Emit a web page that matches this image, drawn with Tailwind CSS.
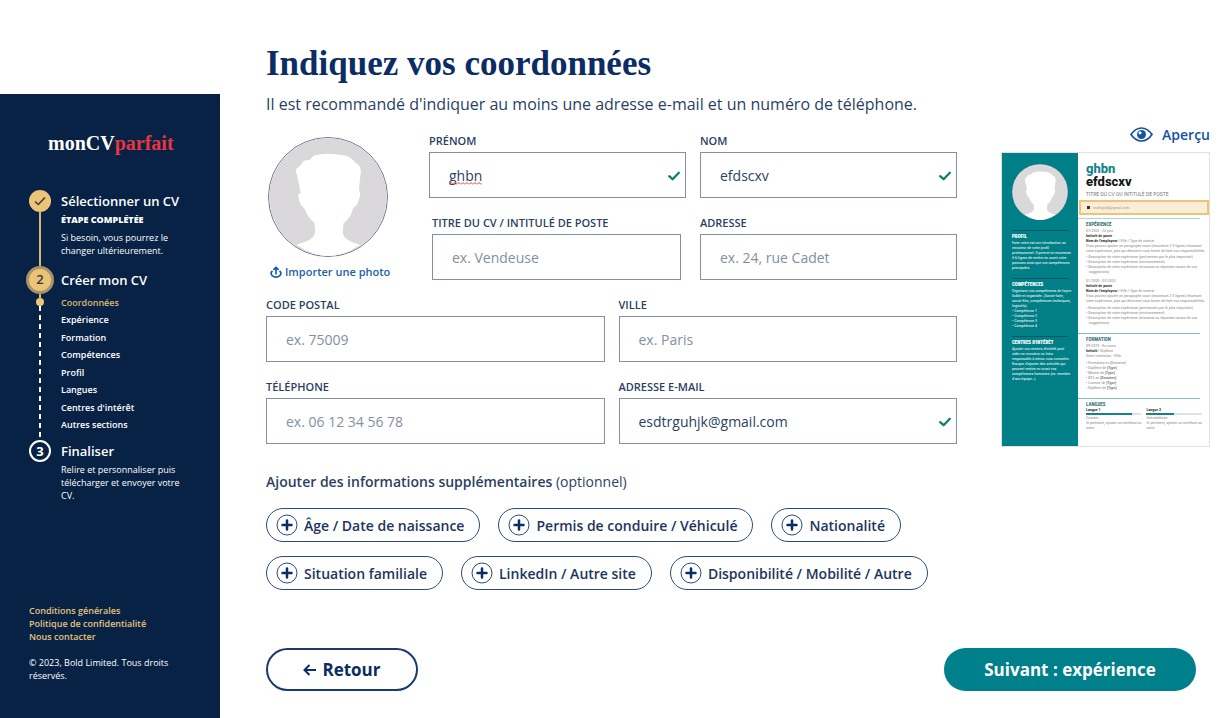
<!DOCTYPE html>
<html lang="fr">
<head>
<meta charset="utf-8">
<meta name="viewport" content="width=device-width, initial-scale=1">
<title>monCVparfait – Coordonnées</title>
<script src="https://cdn.jsdelivr.net/npm/@tailwindcss/browser@4"></script>
</head>
<body class="bg-white text-[#2b3f63] font-['Open_Sans','Noto_Sans',sans-serif]">
<svg class="hidden">
  <symbol id="avatar" viewBox="0 0 358 358">
    <circle cx="179" cy="179" r="178" fill="#dad8da"/>
    <path fill="#fff" d="M81 96L96 82L106 69L124 66L136 53Q176 43 231 53Q252 60 261 74Q280 84 279 101Q275 128 273 159Q279 166 275 180L266 204Q255 208 252 223Q247 242 226 259L224 284Q223 298 238 308Q250 317 276 324Q180 392 84 324L110 315Q140 304 140 284L138 257Q120 245 109 217L96 202Q88 184 89 171L96 167Q90 130 84 110Z"/>
  </symbol>
  <symbol id="tick" viewBox="0 0 12 10"><path d="M1.2 5.2L4.6 8.2L10.8 1.8" fill="none" stroke="#128068" stroke-width="2.3" stroke-linecap="round" stroke-linejoin="round"/></symbol>
  <symbol id="plus" viewBox="0 0 22 22"><circle cx="11" cy="11" r="10" fill="none" stroke="#2d4a7c"/><path d="M11 6.500v9M6.500 11h9" stroke="#0b2d63" stroke-width="2.500" stroke-linecap="round"/></symbol>
</svg>
<div class="flex min-h-screen">
  <aside class="mt-[94px] flex w-[220px] shrink-0 flex-col bg-[#072245] pb-9 text-white">
    <p class="mt-[35px] pl-12 font-['Liberation_Serif',serif] text-[20px] leading-7 font-bold">monCV<span class="text-[#e8363f]">parfait</span></p>
    <ol class="mt-[33px] pl-[26px]">
      <li class="flex min-h-[76px] gap-[7px]">
        <div class="flex w-7 flex-col items-center">
          <span class="flex size-[22px] shrink-0 items-center justify-center rounded-full bg-[#ecc478]"><svg class="h-3 w-3" viewBox="0 0 12 12"><path d="M1 6.500L4.300 9.500L11 2.500" fill="none" stroke="#3a3a3a" stroke-width="1.500"/></svg></span>
          <span class="w-0.5 flex-1 bg-[#d8b572]"></span>
        </div>
        <div>
          <h2 class="text-[13px] leading-[22px] font-semibold">Sélectionner un CV</h2>
          <p class="text-[9px] leading-4 font-extrabold">ÉTAPE COMPLÉTÉE</p>
          <p class="mt-[3px] text-[9px] leading-[13px] font-medium">Si besoin, vous pourrez le<br>changer ultérieurement.</p>
        </div>
      </li>
      <li class="flex gap-[7px]">
        <div class="flex w-7 flex-col items-center">
          <span class="flex size-7 shrink-0 items-center justify-center rounded-full border-[3px] border-[#a8946a] bg-[#ecc478] text-[13px] font-semibold text-[#33363b]">2</span>
          <span class="h-1 w-0.5 bg-[#d8b572]"></span>
          <span class="size-2 rounded-full bg-[#ecc478]"></span>
          <span class="w-0.5 flex-1 bg-[repeating-linear-gradient(to_bottom,#fff_0_5px,transparent_5px_9px)]"></span>
        </div>
        <div class="pb-[7px]">
          <h2 class="text-[13px] leading-7 font-semibold">Créer mon CV</h2>
          <ul class="text-[9px] leading-[17px] font-semibold">
            <li class="text-[#ddb972]">Coordonnées</li>
            <li>Expérience</li>
            <li class="pt-px">Formation</li>
            <li>Compétences</li>
            <li class="pt-px">Profil</li>
            <li>Langues</li>
            <li class="pt-px">Centres d'intérêt</li>
            <li>Autres sections</li>
          </ul>
        </div>
      </li>
      <li class="flex gap-[7px]">
        <div class="flex w-7 flex-col items-center">
          <span class="flex size-[22px] items-center justify-center rounded-full border-2 border-white text-[13px] leading-none font-bold">3</span>
        </div>
        <div>
          <h2 class="text-[13px] leading-[22px] font-semibold">Finaliser</h2>
          <p class="mt-px text-[9px] leading-[13px] font-medium">Relire et personnaliser puis<br>télécharger et envoyer votre<br>CV.</p>
        </div>
      </li>
    </ol>
    <div class="mt-auto pl-[29px] text-[9px] leading-[13px] font-medium">
      <nav class="flex flex-col items-start font-semibold text-[#e5c27b]">
        <a href="#">Conditions générales</a>
        <a href="#">Politique de confidentialité</a>
        <a href="#">Nous contacter</a>
      </nav>
      <p class="mt-[13px]">© 2023, Bold Limited. Tous droits<br>réservés.</p>
    </div>
  </aside>

  <main class="flex flex-1 flex-col pt-[42px] pb-[27px] pl-[46px]">
    <h1 class="font-['Liberation_Serif',serif] text-[35px] leading-[44px] font-bold text-[#0b2d63]">Indiquez vos coordonnées</h1>
    <p class="mt-[6px] text-[16px] leading-6">Il est recommandé d'indiquer au moins une adresse e-mail et un numéro de téléphone.</p>
    <div class="flex flex-1 gap-11 pr-[18px]">
      <form id="coordonnees" class="mt-4 flex-1">
        <div class="flex">
          <div class="flex w-[163px] shrink-0 flex-col pt-[5px] pl-0.5">
            <div class="size-[120px] rounded-full border border-[#6f7890]"><svg class="size-full"><use href="#avatar"/></svg></div>
            <button type="button" class="mt-[7px] flex items-center gap-[3px] pl-0.5 text-[11px] leading-4 font-semibold whitespace-nowrap text-[#1d5fa8]">
              <svg class="size-3" viewBox="0 0 12 12" fill="none" stroke="#1257a8" stroke-width="1.600"><path d="M6 8.500V1.500M3.400 3.900L6 1.400L8.600 3.900M2.500 5Q-.2 7 2.200 9.600Q6 12.600 9.800 9.600Q12.200 7 9.500 5"/></svg>
              Importer une photo
            </button>
          </div>
          <div class="grid flex-1 grid-cols-2 gap-x-[14px] gap-y-4">
            <div>
              <label for="prenom" class="mb-0.5 block text-[11px] leading-[18px] font-semibold">PRÉNOM</label>
              <div class="relative">
                <input id="prenom" value="ghbn" spellcheck="false" class="h-[46px] w-full border border-[#8490a0] px-[19px] text-[14px]">
                <svg class="absolute top-[30px] left-5 h-[3px] w-[33px]"><defs><pattern id="wave" width="4" height="3" patternUnits="userSpaceOnUse"><path d="M0 2.500L2 .5L4 2.500" fill="none" stroke="#e53940"/></pattern></defs><rect width="33" height="3" fill="url(#wave)"/></svg>
                <svg class="absolute top-[19px] right-[6px] h-[10px] w-3"><use href="#tick"/></svg>
              </div>
            </div>
            <div>
              <label for="nom" class="mb-0.5 block text-[11px] leading-[18px] font-semibold">NOM</label>
              <div class="relative">
                <input id="nom" value="efdscxv" spellcheck="false" class="h-[46px] w-full border border-[#8490a0] px-[19px] text-[14px]">
                <svg class="absolute top-[19px] right-[6px] h-[10px] w-3"><use href="#tick"/></svg>
              </div>
            </div>
            <div class="pr-[5px] pl-[3px]">
              <label for="titre" class="mb-0.5 block text-[11px] leading-[18px] font-semibold whitespace-nowrap">TITRE DU CV / INTITULÉ DE POSTE</label>
              <input id="titre" placeholder="ex. Vendeuse" class="block h-[46px] w-full border border-[#8490a0] px-[19px] text-[14px] placeholder:text-[#83909e]">
            </div>
            <div>
              <label for="adresse" class="mb-0.5 block text-[11px] leading-[18px] font-semibold">ADRESSE</label>
              <input id="adresse" placeholder="ex. 24, rue Cadet" class="block h-[46px] w-full border border-[#8490a0] px-[19px] text-[14px] placeholder:text-[#83909e]">
            </div>
          </div>
        </div>
        <div class="mt-4 grid grid-cols-2 gap-x-[14px] gap-y-4">
          <div>
            <label for="cp" class="mb-0.5 block text-[11px] leading-[18px] font-semibold">CODE POSTAL</label>
            <input id="cp" placeholder="ex. 75009" class="block h-[46px] w-full border border-[#8490a0] px-[19px] text-[14px] placeholder:text-[#83909e]">
          </div>
          <div>
            <label for="ville" class="mb-0.5 block text-[11px] leading-[18px] font-semibold">VILLE</label>
            <input id="ville" placeholder="ex. Paris" class="block h-[46px] w-full border border-[#8490a0] px-[19px] text-[14px] placeholder:text-[#83909e]">
          </div>
          <div>
            <label for="tel" class="mb-0.5 block text-[11px] leading-[18px] font-semibold">TÉLÉPHONE</label>
            <input id="tel" type="tel" placeholder="ex. 06 12 34 56 78" class="block h-[46px] w-full border border-[#8490a0] px-[19px] text-[14px] placeholder:text-[#83909e]">
          </div>
          <div>
            <label for="mail" class="mb-0.5 block text-[11px] leading-[18px] font-semibold">ADRESSE E-MAIL</label>
            <div class="relative">
              <input id="mail" type="email" value="esdtrguhjk@gmail.com" class="block h-[46px] w-full border border-[#8490a0] px-[19px] text-[14px]">
              <svg class="absolute top-[19px] right-[6px] h-[10px] w-3"><use href="#tick"/></svg>
            </div>
          </div>
        </div>
        <p class="mt-[26px] text-[14px] leading-6"><b class="font-semibold">Ajouter des informations supplémentaires</b> (optionnel)</p>
        <div class="mt-[14px] flex flex-wrap gap-x-[18px] gap-y-[14px] text-[14px] font-semibold text-[#1c355e]">
          <button type="button" class="flex h-[34px] items-center gap-[6px] rounded-full border border-[#2d4a7c] pr-[15px] pl-[9px]"><svg class="size-[22px]"><use href="#plus"/></svg>Âge / Date de naissance</button>
          <button type="button" class="flex h-[34px] items-center gap-[6px] rounded-full border border-[#2d4a7c] pr-[15px] pl-[9px]"><svg class="size-[22px]"><use href="#plus"/></svg>Permis de conduire / Véhiculé</button>
          <button type="button" class="flex h-[34px] items-center gap-[6px] rounded-full border border-[#2d4a7c] pr-[15px] pl-[9px]"><svg class="size-[22px]"><use href="#plus"/></svg>Nationalité</button>
          <button type="button" class="flex h-[34px] items-center gap-[6px] rounded-full border border-[#2d4a7c] pr-[15px] pl-[9px]"><svg class="size-[22px]"><use href="#plus"/></svg>Situation familiale</button>
          <button type="button" class="flex h-[34px] items-center gap-[6px] rounded-full border border-[#2d4a7c] pr-[15px] pl-[9px]"><svg class="size-[22px]"><use href="#plus"/></svg>LinkedIn / Autre site</button>
          <button type="button" class="flex h-[34px] items-center gap-[6px] rounded-full border border-[#2d4a7c] pr-[15px] pl-[9px]"><svg class="size-[22px]"><use href="#plus"/></svg>Disponibilité / Mobilité / Autre</button>
        </div>
      </form>

      <section class="mt-[6px] w-[209px] shrink-0">
        <button type="button" class="ml-auto flex h-6 items-center gap-[9px] text-[14px] font-semibold text-[#1553a3]">
          <svg class="h-[15px] w-[23px]" viewBox="0 0 23 15"><path d="M1 7.500Q5.500 1 11.500 1T22 7.500Q17.500 14 11.500 14T1 7.500Z" fill="none" stroke="#1553a3" stroke-width="1.700"/><circle cx="11.500" cy="7.500" r="4.500" fill="#1553a3"/><circle cx="10" cy="5.800" r="1.600" fill="#fff"/></svg>
          Aperçu
        </button>
        <article class="mt-[6px] flex h-[295px] overflow-hidden border border-[#dfe1e4] font-['Roboto_Condensed','Liberation_Sans_Narrow',Roboto,sans-serif] text-[4px] leading-[5px] text-[#777]">
          <div class="w-[76px] shrink-0 bg-[#007f87] pt-[10px] pr-[10px] pl-[10px] whitespace-nowrap text-white">
            <svg class="h-[58px] w-[56px]"><use href="#avatar"/></svg>
            <h3 class="mt-[9px] border-t border-[#0b5560] pt-[2px] text-[5px] leading-[7px] font-black">PROFIL</h3>
            <p>Faire votre est une introduction au<br>recruteur de votre profil<br>professionnel. Il permet en maximum<br>5-6 lignes de mettre en avant votre<br>parcours ainsi que vos compétences<br>principales.</p>
            <h3 class="mt-[8px] border-t border-[#0b5560] pt-[2px] text-[5px] leading-[7px] font-black">COMPÉTENCES</h3>
            <p>Organisez vos compétences de façon<br>lisible et organisée. (Savoir-faire,<br>savoir-être, compétences techniques,<br>logiciels).<br>• Compétence 1<br>• Compétence 2<br>• Compétence 3<br>• Compétence 4</p>
            <h3 class="mt-[8px] border-t border-[#0b5560] pt-[2px] text-[5px] leading-[7px] font-black">CENTRES D'INTÉRÊT</h3>
            <p>Ajouter vos centres d'intérêt peut<br>aider un recruteur ou futur<br>responsable à mieux vous connaître.<br>Essayer d'ajouter des activités qui<br>peuvent mettre en avant vos<br>compétences humaines (ex. membre<br>d'une équipe…)</p>
          </div>
          <div class="min-w-0 flex-1 whitespace-nowrap">
            <div class="pt-[9px] pl-[8px] font-[Roboto,sans-serif]">
              <p class="text-[13px] leading-[13px] font-extrabold text-[#14838a]">ghbn</p>
              <p class="text-[13px] leading-[13px] font-extrabold text-[#161616]">efdscxv</p>
              <p class="mt-[3px] text-[5px] leading-[6px]">TITRE DU CV OU INTITULÉ DE POSTE</p>
            </div>
            <div class="mt-[3px] ml-px flex h-[15px] items-center gap-[3px] border-2 border-[#ecc478] bg-[#fbeed8] pl-[6px] text-[#a99c85]"><span class="size-[3px] bg-[#333]"></span>esdtrguhjk@gmail.com</div>
            <div class="pr-[9px] text-[#888]">
              <div class="mt-[3px] border-t border-[#a9d3d6] pt-[2px] pl-[8px]">
                <h3 class="text-[5px] leading-[6px] font-bold text-[#2f7076]">EXPÉRIENCE</h3>
                <p class="mt-px">01/2023 - Ce jour<br><b class="text-[#333]">Intitulé de poste</b><br><b class="text-[#333]">Nom de l'employeur</b> | Ville | Type de contrat</p>
                <p>Vous pouvez ajouter un paragraphe court (maximum 2-3 lignes) résumant<br>votre expérience, puis qui décrivent vous forme de liste vos responsabilités.</p>
                <p class="mt-px">• Description de votre expérience (pertinentes par le plus important)<br>• Description de votre expérience (environnement)<br>• Description de votre expérience (missions ou réponses issues de vos<br>&nbsp; &nbsp;suggestions)</p>
                <p class="mt-[4px]">01/2020 - 01/2023<br><b class="text-[#333]">Intitulé de poste</b><br><b class="text-[#333]">Nom de l'employeur</b> | Ville | Type de contrat</p>
                <p>Vous pouvez ajouter un paragraphe court (maximum 2-3 lignes) résumant<br>votre expérience, puis qui décrivent vous forme de liste vos responsabilités.</p>
                <p class="mt-[2px]">• Description de votre expérience (pertinentes par le plus important)<br>• Description de votre expérience (environnement)<br>• Description de votre expérience (missions ou réponses issues de vos<br>&nbsp; &nbsp;suggestions)</p>
              </div>
              <div class="mt-[8px] border-t border-[#7fbcc1] pt-[2px] pl-[8px]">
                <h3 class="text-[5px] leading-[6px] font-bold text-[#2f7076]">FORMATION</h3>
                <p class="mt-px">09/2019 - En cours<br><b class="text-[#333]">Intitulé</b> | Diplôme<br>Votre institution - Ville</p>
                <p class="mt-[2px]">• Formation en [Domaine]<br>• Diplôme de <b>[Type]</b><br>• Master de <b>[Type]</b><br>• BTS en <b>[Domaine]</b><br>• Licence de <b>[Type]</b><br>• Diplôme de <b>[Type]</b></p>
              </div>
              <div class="mt-[8px] border-t border-[#7fbcc1] pt-[2px] pl-[8px]">
                <h3 class="text-[5px] leading-[6px] font-bold text-[#2f7076]">LANGUES</h3>
                <div class="flex gap-[5px]">
                  <div class="flex-1"><b class="text-[#333]">Langue 1</b><div class="mt-px h-[2px] bg-[#dde3e5]"><div class="h-[2px] w-10/12 bg-[#14838a]"></div></div>Courant<br>Si pertinent, ajouter un certificat ou<br>autre</div>
                  <div class="flex-1"><b class="text-[#333]">Langue 2</b><div class="mt-px h-[2px] bg-[#dde3e5]"><div class="h-[2px] w-1/2 bg-[#14838a]"></div></div>Intermédiaire<br>Si pertinent, ajouter un certificat ou<br>autre</div>
                </div>
              </div>
            </div>
          </div>
        </article>
      </section>
    </div>
    <div class="flex justify-between pr-8">
      <button type="button" class="flex h-[43px] w-[152px] items-center justify-center gap-[6px] rounded-full border-2 border-[#1b3a6d] text-[17px] font-bold text-[#0b2d63]">
        <svg class="h-3 w-[13px]" viewBox="0 0 13 12" fill="none" stroke="#0b2d63" stroke-width="2"><path d="M13 6H1.500M6.500 1L1.500 6L6.500 11"/></svg>Retour
      </button>
      <button type="submit" form="coordonnees" class="h-[43px] w-[252px] rounded-full bg-[#00808a] text-[17px] font-bold text-white">Suivant : expérience</button>
    </div>
  </main>
</div>
</body>
</html>
